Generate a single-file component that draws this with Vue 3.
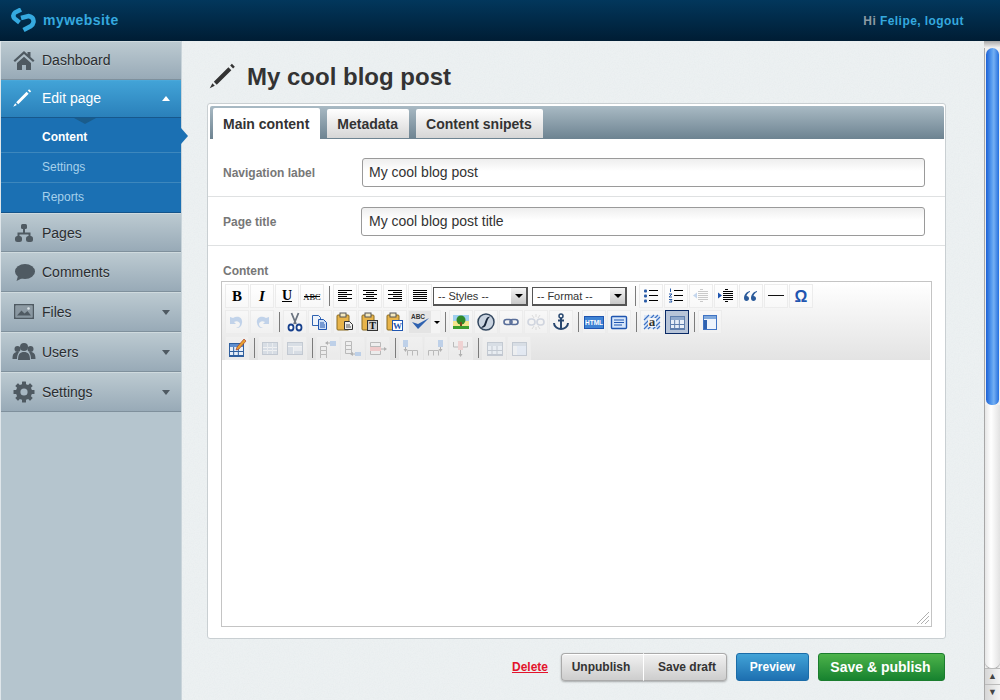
<script setup>
const hlines = (rows, fill = '#000') =>
  rows.map(([x, y, w]) => `<rect x="${x}" y="${y}" width="${w}" height="1" fill="${fill}"/>`).join('')

const clip = '<rect x="2" y="3" width="12" height="15" rx="1" fill="#e8b44a" stroke="#8a6a20" stroke-width="1"/><rect x="5" y="1" width="6" height="4" fill="#f4e9c0" stroke="#555" stroke-width="1"/>'
const tableGrid = (x, y, w, h, stroke = '#7f9cc4', head = '#a9c0e0') =>
  `<rect x="${x}.5" y="${y}.5" width="${w}" height="${h}" fill="#e6eef8" stroke="${stroke}"/><rect x="${x + 1}" y="${y + 1}" width="${w - 1}" height="3" fill="${head}"/>` +
  `<path d="M${x} ${y + 8.5}h${w}M${x} ${y + 12.5}h${w}M${x + w / 3} ${y + 4}v${h - 4}M${x + (2 * w) / 3} ${y + 4}v${h - 4}" stroke="${stroke}" fill="none"/>`
const stackedRows = (x, y, w, h) =>
  `<path d="M${x}.5 ${y}.5h${w}v${h}h-${w}zM${x}.5 ${y + h}.5h${w}v${h}h-${w}zM${x}.5 ${y + 2 * h}.5h${w}v${h}h-${w}z" fill="none" stroke="#888"/>`
const columns = (x, y, w, h) =>
  `<path d="M${x}.5 ${y + h}.5v-${h}h${w}v${h}M${x + w}.5 ${y}.5h${w}v${h}" fill="none" stroke="#888"/>`
const blueBlock = (x, y, w, h) => `<rect x="${x}" y="${y}" width="${w}" height="${h}" fill="#8fb4e4"/>`

const icons = {
  bold: '<text x="10" y="15" text-anchor="middle" font-family="Liberation Serif" font-weight="700" font-size="15" fill="#000">B</text>',
  italic: '<text x="10" y="15" text-anchor="middle" font-family="Liberation Serif" font-weight="700" font-style="italic" font-size="15" fill="#000">I</text>',
  underline: '<text x="10" y="14" text-anchor="middle" font-family="Liberation Serif" font-weight="700" font-size="14" fill="#000">U</text><rect x="5" y="15" width="10" height="1" fill="#000"/>',
  strike: '<text x="10" y="13.5" text-anchor="middle" font-family="Liberation Serif" font-size="8.5" fill="#000">ABC</text><rect x="2" y="10" width="16" height="1" fill="#000"/>',
  alignLeft: hlines([[3, 4, 14], [3, 6, 9], [3, 8, 14], [3, 10, 9], [3, 12, 14], [3, 14, 9]]),
  alignCenter: hlines([[3, 4, 14], [6, 6, 8], [3, 8, 14], [6, 10, 8], [3, 12, 14], [6, 14, 8]]),
  alignRight: hlines([[3, 4, 14], [8, 6, 9], [3, 8, 14], [8, 10, 9], [3, 12, 14], [8, 14, 9]]),
  justify: hlines([[3, 4, 14], [3, 6, 14], [3, 8, 14], [3, 10, 14], [3, 12, 14], [3, 14, 14]]),
  bullets: '<rect x="3" y="3.500" width="3" height="3" rx="1" fill="#2a5ca8"/><rect x="3" y="8.500" width="3" height="3" rx="1" fill="#2a5ca8"/><rect x="3" y="13.500" width="3" height="3" rx="1" fill="#2a5ca8"/>' + hlines([[8, 4, 9], [8, 9, 9], [8, 14, 9]]),
  numbers: '<path d="M4.500 2.500v3.500M3 8h3l-3 3h3M3 13.500h3l-1 1 1 1.500h-3" fill="none" stroke="#2a5ca8"/>' + hlines([[8, 4, 9], [8, 9, 9], [8, 14, 9]]),
  outdent: '<path d="M2 9.500l4-3v6z" fill="#8fb2e0"/>' + hlines([[9, 3, 3], [7, 5, 10], [7, 7, 10], [7, 9, 10], [7, 11, 10], [7, 13, 10], [9, 15, 3]], '#999'),
  indent: '<path d="M6 9.500l-4-3v6z" fill="#1f55b0"/>' + hlines([[9, 3, 3], [7, 5, 10], [7, 7, 10], [7, 9, 10], [7, 11, 10], [7, 13, 10], [9, 15, 3]]),
  quote: '<path d="M9 5C5 6 3 9 3 12c0 2 1 3 2.500 3S8 14 8 12.500 7 10 5.500 10C6 8 7.500 6.500 9 6zM16 5c-4 1-6 4-6 7 0 2 1 3 2.500 3s2.500-1 2.500-2.500-1-2.500-2.500-2.500c.5-2 2-3.500 3.500-4z" fill="#2a5a9a"/>',
  rule: '<rect x="2" y="9" width="16" height="1" fill="#111"/>',
  omega: '<text x="10" y="16" text-anchor="middle" font-family="Liberation Sans" font-weight="700" font-size="16" fill="#1f55b0">Ω</text>',
  undo: '<path d="M6 6C11 3 16 6 15 11s-4 5-6 5c3-1 4-2 4-4s-3-4-6-2l2 2H3V5z" fill="#8fb2e0"/>',
  redo: '<path d="M14 6C9 3 4 6 5 11s4 5 6 5c-3-1-4-2-4-4s3-4 6-2l-2 2h6V5z" fill="#8fb2e0"/>',
  cut: '<path d="M6.500 1l4.500 11M13.500 1L9 12" stroke="#6b7480" stroke-width="1.800" fill="none"/><ellipse cx="6" cy="15.500" rx="2.500" ry="3" fill="#fff" stroke="#17408c" stroke-width="1.800"/><ellipse cx="14" cy="15.500" rx="2.500" ry="3" fill="#fff" stroke="#17408c" stroke-width="1.800"/>',
  copy: '<path d="M2.500 3.500h6l2 2v8h-8z" fill="#eef4fc" stroke="#2f62b0"/><path d="M8.500 7.500h5l3 3v7h-8z" fill="#cfe0f6" stroke="#1f55b0"/><path d="M10 11h4M10 13h5M10 15h5" stroke="#1f55b0"/>',
  paste: clip + '<path d="M9.500 9.500h5l3 3v5h-8z" fill="#eee" stroke="#333"/><path d="M11 13h4M11 15h5" stroke="#555"/>',
  pasteText: clip + '<rect x="7.500" y="8.500" width="10" height="10" fill="#cfcfcf" stroke="#333"/><text x="12.500" y="17" text-anchor="middle" font-family="Liberation Serif" font-weight="700" font-size="10" fill="#111">T</text>',
  pasteWord: clip + '<rect x="7.500" y="8.500" width="10" height="10" fill="#fff" stroke="#1f55b0"/><text x="12.500" y="17" text-anchor="middle" font-family="Liberation Serif" font-weight="700" font-size="9" fill="#1f55b0">W</text>',
  spell: '<text x="8" y="7" text-anchor="middle" font-family="Liberation Sans" font-weight="700" font-size="6.500" fill="#333">ABC</text><path d="M2 10l6 7L19 6 8 12z" fill="#2f62b0"/>',
  image: '<rect x="2" y="3" width="16" height="14" fill="#f4e58c"/><rect x="2" y="3" width="16" height="6" fill="#9fd0f0"/><circle cx="10" cy="8" r="4.500" fill="#2f8a2a"/><rect x="9" y="10" width="2" height="5" fill="#7a4b1e"/><rect x="2" y="14" width="16" height="3" fill="#3c9e2e"/>',
  flash: '<circle cx="10" cy="10" r="8" fill="#c9d3e0" stroke="#33475f" stroke-width="1.500"/><path d="M14.500 4.500c-4 0-4.500 3-5.500 5.500s-1 4-4.500 5.500c5.500 1 5.500-3 6.500-5.500s1-4 3.500-5.500z" fill="#17253a"/>',
  link: '<rect x="3" y="7.500" width="8" height="5" rx="2.500" fill="none" stroke="#5a6f9a" stroke-width="1.600"/><rect x="9" y="7.500" width="8" height="5" rx="2.500" fill="none" stroke="#5a6f9a" stroke-width="1.600"/>',
  unlink: '<g opacity=".45"><rect x="2" y="7" width="7" height="6" rx="3" fill="none" stroke="#5a6f9a" stroke-width="1.600"/><rect x="11" y="7" width="7" height="6" rx="3" fill="none" stroke="#5a6f9a" stroke-width="1.600"/><path d="M6 3l2 3M14 3l-2 3M6 17l2-3M14 17l-2-3M10 2v3M10 15v3" stroke="#888"/></g>',
  anchor: '<circle cx="10" cy="4" r="2" fill="none" stroke="#28476f" stroke-width="1.500"/><path d="M10 6v11M7 8.500h6M3 11c0 4 4 6 7 6s7-2 7-6" fill="none" stroke="#28476f" stroke-width="2"/>',
  html: '<rect x=".5" y="4.500" width="19" height="12" fill="#3f83d4" stroke="#1f55b0"/><text x="10" y="13" text-anchor="middle" font-family="Liberation Sans" font-weight="700" font-size="6.500" fill="#fff">HTML</text>',
  source: '<rect x="2.500" y="4.500" width="15" height="12" rx="1" fill="#d6e6fa" stroke="#1f55b0" stroke-width="1.400"/><path d="M5 8h10M5 10.500h10M5 13h8" stroke="#1f55b0"/>',
  visual: '<rect x="2" y="3" width="16" height="14" fill="#dbe7f8"/><path d="M2 8l5-5M2 13l10-10M2 17L16 3M6 17L18 5M11 17l7-7M15 17l3-3" stroke="#3f73c4" stroke-width="1.200"/><rect x="6" y="6" width="8" height="9" fill="#f4f4f4"/><text x="10" y="14" text-anchor="middle" font-family="Liberation Serif" font-weight="700" font-size="13" fill="#333">a</text>',
  table: tableGrid(3, 4, 14, 13, '#5f7fae', '#8fa8cc'),
  layout: '<rect x="3.500" y="3.500" width="13" height="14" fill="#eef4fc" stroke="#3f73c4"/><rect x="4" y="4" width="12" height="3" fill="#7fa8dc"/><rect x="4" y="8" width="3" height="9" fill="#2f62b0"/>',
  tableEdit: tableGrid(2, 5, 14, 13, '#2f5f9e', '#5f8fcf') + '<path d="M17 1l2 2-7 8-3 1 1-3z" fill="#e8a030" stroke="#a03020" stroke-width=".6"/>',
  rowProps: '<rect x="2.500" y="4.500" width="15" height="12" fill="#c3cfde" stroke="#9aa7b8"/><path d="M3 9.500h14M3 12.500h14" stroke="#f4f6f8"/><path d="M7.500 5v11M12.500 5v11" stroke="#e6ebf1" />',
  cellProps: '<rect x="2.500" y="4.500" width="15" height="12" fill="#c3cfde" stroke="#9aa7b8"/><path d="M3 8.500h14M8.500 9v7" stroke="#f4f6f8"/><rect x="9" y="9" width="8" height="4" fill="#e6ebf1"/>',
  rowBefore: stackedRows(2, 8, 6, 4) + '<path d="M8 5h4" stroke="#777"/><path d="M7 5l3-2v4z" fill="#777"/>' + blueBlock(12, 3, 6, 5),
  rowAfter: stackedRows(2, 3, 6, 4) + '<path d="M8 16h4" stroke="#777"/><path d="M7 16l3-2v4z" fill="#777"/>' + blueBlock(12, 14, 6, 4),
  rowDelete: stackedRows(2, 4, 10, 4) + '<rect x="2" y="9" width="11" height="4" fill="#f0a8a8"/><path d="M13 11h4" stroke="#777"/><path d="M19 11l-3-2v4z" fill="#777"/>',
  colBefore: columns(6, 12, 5, 5) + blueBlock(2, 2, 5, 7) + '<path d="M4.500 9v4" stroke="#777"/><path d="M4.500 14l-2-3h4z" fill="#777"/>',
  colAfter: columns(2, 12, 5, 5) + blueBlock(12, 2, 5, 7) + '<path d="M14.500 9v4" stroke="#777"/><path d="M14.500 14l-2-3h4z" fill="#777"/>',
  colDelete: '<path d="M2.500 4v5h14V4M9.500 9v3" fill="none" stroke="#888"/><rect x="7" y="3" width="5" height="9" fill="#f0b8b8"/><path d="M9.500 12v5" stroke="#777"/><path d="M9.500 19l-2-3h4z" fill="#777"/>',
  split: tableGrid(3, 4, 15, 13, '#9aa7b8', '#c3cfde'),
  merge: '<rect x="3.500" y="4.500" width="14" height="13" fill="#dbe7f8" stroke="#9aa7b8"/><rect x="4" y="5" width="13" height="3" fill="#c3cfde"/><rect x="4" y="8" width="4" height="9" fill="#eef2f6"/>'
}

const btn = (icon, extra = {}) => ({ type: 'btn', icon, ...extra })
const off = (icon) => btn(icon, { dim: true })
const sep = { type: 'sep' }

const rows = [
  [btn('bold'), btn('italic'), btn('underline'), btn('strike'), sep, btn('alignLeft'), btn('alignCenter'), btn('alignRight'), btn('justify'),
    { type: 'select', label: '-- Styles --' }, { type: 'select', label: '-- Format --' }, sep,
    btn('bullets'), btn('numbers'), off('outdent'), btn('indent'), btn('quote'), btn('rule'), btn('omega')],
  [off('undo'), off('redo'), sep, btn('cut'), btn('copy'), btn('paste'), btn('pasteText'), btn('pasteWord'), btn('spell', { split: true }), sep,
    btn('image'), btn('flash'), btn('link'), off('unlink'), btn('anchor'), sep, btn('html'), btn('source'), sep, btn('visual'), btn('table', { active: true }), sep, btn('layout')],
  [btn('tableEdit'), sep, off('rowProps'), off('cellProps'), sep, off('rowBefore'), off('rowAfter'), off('rowDelete'), sep, off('colBefore'), off('colAfter'), off('colDelete'), sep, off('split'), off('merge')]
]

const navIcons = {
  home: '<path d="M12 3L1.500 12.500 3 14l9-8 9 8 1.500-1.500-4-3.600V4h-3v2.200zM5 15v7h5v-5h4v5h5v-7l-7-6.200z"/>',
  pencil: '<path d="M20.500 1.500l2.500 2.500-1.500 1.500-2.500-2.500zM17.500 4.500l2.500 2.500L7.500 19.500 5 17zM3.800 18.300l2 2-4.300 2.200z"/>',
  tree: '<rect x="9" y="3" width="6" height="5" rx="1.500"/><path d="M12 7v5M6.500 16v-3.500h11V16" fill="none" stroke="currentColor" stroke-width="2"/><rect x="3" y="15" width="7" height="6" rx="2.500"/><rect x="14" y="15" width="7" height="6" rx="2.500"/>',
  bubble: '<ellipse cx="13" cy="11.500" rx="10" ry="7.500"/><path d="M6 16l-1.500 5 6-3z"/>',
  picture: '<path fill-rule="evenodd" d="M2 4h20v15H2zM3.500 5.500v12h17v-12z"/><rect x="4" y="6" width="16" height="11" opacity=".35"/><path d="M5 15.500l4.500-5 3 3 3-2.500 3.500 4.500z"/><circle cx="16.500" cy="8.500" r="1.300" fill="#dde4e8"/>',
  users: '<circle cx="12" cy="7" r="4"/><path d="M6 20c0-6 2-8 6-8s6 2 6 8z"/><circle cx="5.500" cy="9" r="3"/><path d="M0.500 19c0-5 1.500-7 5-7 .5 0 1 0 1.500.2C5.500 14 5 16.500 5 19z"/><circle cx="18.500" cy="9" r="3"/><path d="M23.500 19c0-5-1.500-7-5-7-.5 0-1 0-1.500.2 1.500 1.800 2 4.300 2 6.800z"/>',
  gear: '<circle cx="12" cy="12" r="5.800" fill="none" stroke="currentColor" stroke-width="4.600"/><g><rect x="10" y="1.500" width="4" height="21" rx=".5"/><rect x="10" y="1.500" width="4" height="21" rx=".5" transform="rotate(45 12 12)"/><rect x="10" y="1.500" width="4" height="21" rx=".5" transform="rotate(90 12 12)"/><rect x="10" y="1.500" width="4" height="21" rx=".5" transform="rotate(135 12 12)"/></g><circle cx="12" cy="12" r="3.600" fill="#a7b7c2"/>'
}

const navTop = [{ label: 'Dashboard', icon: 'home', cls: 'h39 raised' }]
const navBottom = [
  { label: 'Pages', icon: 'tree', cls: 'h39' },
  { label: 'Comments', icon: 'bubble' },
  { label: 'Files', icon: 'picture', caret: true },
  { label: 'Users', icon: 'users', caret: true },
  { label: 'Settings', icon: 'gear', caret: true }
]
</script>

<template>
  <div class="page">
    <header class="topbar">
      <div class="brand">
        <svg class="logo" viewBox="0 0 26 26" width="26" height="26">
          <path d="M11 1.500L5 4.500Q2 7.500 4.500 10.500L9.500 14.500" fill="none" stroke="#35a9df" stroke-width="4.500"/>
          <path d="M11 10L18.500 8Q24 9 23.500 14 23 16.500 21 18L13.500 22" fill="none" stroke="#35a9df" stroke-width="4.500"/>
        </svg>
        <span class="brand-name">mywebsite</span>
      </div>
      <div class="greeting">Hi <a>Felipe, logout</a></div>
    </header>

    <div class="body">
      <aside class="sidebar">
        <div v-for="item in navTop" :key="item.label" class="nav-item" :class="item.cls">
          <svg class="nav-icon" viewBox="0 0 24 24" v-html="navIcons[item.icon]"></svg>
          <span>{{ item.label }}</span>
        </div>

        <div class="nav-item active raised">
          <svg class="nav-icon" viewBox="0 0 24 24" v-html="navIcons.pencil"></svg>
          <span>Edit page</span>
          <i class="caret up"></i>
        </div>
        <div class="submenu">
          <div class="sub current">Content</div>
          <div class="sub">Settings</div>
          <div class="sub last">Reports</div>
        </div>

        <div v-for="item in navBottom" :key="item.label" class="nav-item" :class="item.cls">
          <svg class="nav-icon" viewBox="0 0 24 24" v-html="navIcons[item.icon]"></svg>
          <span>{{ item.label }}</span>
          <i v-if="item.caret" class="caret"></i>
        </div>
      </aside>

      <main class="main">
        <div class="title-row">
          <svg class="title-icon" viewBox="0 0 24 24" v-html="navIcons.pencil"></svg>
          <h1>My cool blog post</h1>
        </div>

        <section class="card">
          <nav class="tabs">
            <div class="tab selected">Main content</div>
            <div class="tab">Metadata</div>
            <div class="tab">Content snipets</div>
          </nav>

          <div class="field first">
            <label>Navigation label</label>
            <input value="My cool blog post" />
          </div>
          <div class="field second">
            <label>Page title</label>
            <input value="My cool blog post title" />
          </div>

          <div class="content-block">
            <div class="content-label">Content</div>
            <div class="editor">
              <div class="toolbar">
                <div v-for="(row, r) in rows" :key="r" class="tool-row">
                  <template v-for="(tool, t) in row" :key="t">
                    <span v-if="tool.type === 'sep'" class="tool-sep"></span>
                    <div v-else-if="tool.type === 'select'" class="tool-select">
                      <span>{{ tool.label }}</span>
                      <i></i>
                    </div>
                    <div v-else class="tool" :class="{ active: tool.active, split: tool.split }">
                      <svg :class="{ dim: tool.dim }" viewBox="0 0 20 20" width="20" height="20" v-html="icons[tool.icon]"></svg>
                      <b v-if="tool.split"></b>
                    </div>
                  </template>
                </div>
              </div>
              <div class="editor-area">
                <svg class="grip" viewBox="0 0 14 14" width="14" height="14">
                  <path d="M1 13L13 1M5 13l8-8M9 13l4-4" stroke="#b0b0b0" fill="none"/>
                </svg>
              </div>
            </div>
          </div>
        </section>

        <div class="actions">
          <a class="delete">Delete</a>
          <div class="group">
            <button class="unpublish">Unpublish</button>
            <button class="draft">Save draft</button>
          </div>
          <button class="preview">Preview</button>
          <button class="publish">Save &amp; publish</button>
        </div>
      </main>

      <div class="scrollbar">
        <div class="thumb-cap"></div>
        <div class="thumb"></div>
        <div class="track"></div>
        <div class="arrow">▲</div>
        <div class="arrow">▼</div>
      </div>
    </div>
  </div>
</template>

<style>
html, body { margin: 0; height: 100%; overflow: hidden; }
</style>

<style scoped>
.page {
  width: 1000px;
  height: 700px;
  display: flex;
  flex-direction: column;
  font-family: "Liberation Sans", Arial, sans-serif;
  color: #333;
  overflow: hidden;
}

.topbar {
  height: 41px;
  flex: none;
  display: flex;
  align-items: center;
  justify-content: space-between;
  padding: 0 36px 0 10px;
  box-sizing: border-box;
  background: linear-gradient(#02375c, #001d34);
}
.brand { display: flex; align-items: center; }
.logo { margin-right: 7px; }
.brand-name {
  font-size: 14px;
  font-weight: 700;
  color: #35a9df;
  letter-spacing: .45px;
  position: relative;
  top: -1px;
}
.greeting { font-size: 12px; font-weight: 700; color: #8d9aa3; letter-spacing: .43px; }
.greeting a { color: #35a9df; }

.body { flex: 1; display: flex; min-height: 0; }

.sidebar {
  width: 182px;
  flex: none;
  box-sizing: border-box;
  background: #b5c5ce;
  border-left: 1px solid #dfe6ea;
  border-right: 1px solid #c9d4da;
}

.nav-item {
  height: 40px;
  box-sizing: border-box;
  display: flex;
  align-items: center;
  padding: 0 9px 0 11px;
  font-size: 14px;
  color: #2a2d30;
  text-shadow: 0 1px 0 rgba(255, 255, 255, .35);
  background: linear-gradient(#bccad1, #98aab7);
  border-top: 1px solid #cfdade;
  border-bottom: 1px solid #7f909c;
}
.nav-item.h39 { height: 39px; }
.nav-item.raised { padding-bottom: 2px; }
.nav-item.active {
  height: 38px;
  color: #fff;
  text-shadow: none;
  background: linear-gradient(#42a3d7, #2a80ba);
  border-top-color: #4aa8da;
  border-bottom-color: #17588c;
}
.nav-icon {
  width: 24px;
  height: 24px;
  margin-right: 6px;
  fill: #4f5a62;
  color: #4f5a62;
  flex: none;
}
.active .nav-icon { fill: #fff; color: #fff; width: 20px; height: 20px; margin: 0 10px 0 0; }
.caret {
  margin-left: auto;
  margin-right: 2px;
  width: 0;
  height: 0;
  border-left: 4.500px solid transparent;
  border-right: 4.500px solid transparent;
  border-top: 5px solid #4f5a62;
}
.caret.up { border-top: 0; border-bottom: 5px solid #fff; }

.submenu {
  position: relative;
  background: #1b70b3;
  border-bottom: 1px solid #14548a;
  height: 95px;
  box-sizing: border-box;
}
.submenu::before {
  content: "";
  position: absolute;
  left: 73px;
  top: 0;
  border-left: 11px solid transparent;
  border-right: 11px solid transparent;
  border-top: 6px solid #1a5c8c;
}
.sub {
  height: 30px;
  box-sizing: border-box;
  display: flex;
  align-items: center;
  padding: 0 0 1px 41px;
  font-size: 12px;
  color: #a6d0ec;
  border-bottom: 1px solid #3d87bd;
}
.sub.last { border-bottom: 0; height: 30px; padding-bottom: 2px; }
.sub.current { height: 35px; padding: 3px 0 0 41px; color: #fff; font-weight: 700; position: relative; }
.sub.current::after {
  content: "";
  position: absolute;
  right: -7px;
  top: 10px;
  border-top: 8px solid transparent;
  border-bottom: 8px solid transparent;
  border-left: 7px solid #1b70b3;
}

.main {
  flex: 1;
  min-width: 0;
  box-sizing: border-box;
  padding: 0 38px 0 25px;
  background-color: #eef2f3;
  background-image: url("data:image/svg+xml,%3Csvg xmlns='http://www.w3.org/2000/svg' width='200' height='200'%3E%3Cfilter id='n'%3E%3CfeTurbulence type='fractalNoise' baseFrequency='.8' numOctaves='2'/%3E%3CfeColorMatrix values='0 0 0 0 .5 0 0 0 0 .55 0 0 0 0 .58 0 0 0 .12 0'/%3E%3C/filter%3E%3Crect width='200' height='200' filter='url(%23n)'/%3E%3C/svg%3E");
}

.title-row { height: 62px; box-sizing: border-box; padding-top: 8px; display: flex; align-items: center; }
.title-icon { width: 28px; height: 28px; fill: #333; margin: 0 11px 0 1px; flex: none; }
h1 { margin: 0; font-size: 24px; font-weight: 700; color: #333; position: relative; top: 1px; }

.card {
  height: 536px;
  box-sizing: border-box;
  background: #fff;
  border: 1px solid #c9cfd2;
  border-radius: 3px;
}

.tabs {
  height: 33px;
  box-sizing: border-box;
  margin: 2px 1px 0 2px;
  padding: 2px 0 0 3px;
  display: flex;
  gap: 7px;
  background: linear-gradient(#a9bac4, #6d8391);
  border-radius: 2px 2px 0 0;
}
.tab {
  height: 29px;
  box-sizing: border-box;
  padding: 0 11px 0 10px;
  display: flex;
  align-items: center;
  font-size: 14px;
  font-weight: 700;
  color: #333;
  border-radius: 2px 2px 0 0;
  background: linear-gradient(#fff, #d6d6d6);
  margin-top: 1px;
}
.tab.selected { height: 31px; margin-top: 0; background: #fff; }

.field {
  display: flex;
  align-items: center;
  box-sizing: border-box;
  padding: 0 20px 0 15px;
  border-bottom: 1px solid #dfe1e2;
}
.field.first { height: 58px; padding-top: 9px; }
.field.second { height: 49px; }
.field label { width: 139px; flex: none; font-size: 12px; font-weight: 700; color: #777; padding-top: 2px; }
.field.second label { width: 138px; }
.field input {
  flex: 1;
  min-width: 0;
  height: 29px;
  box-sizing: border-box;
  padding: 0 6px;
  border: 1px solid #9a9a9a;
  border-radius: 3px;
  font-family: inherit;
  font-size: 14px;
  color: #333;
  outline: none;
  background: linear-gradient(#eee, #fff 45%);
}
.field.second input { padding-left: 7px; }

.content-block { padding: 18px 13px 0; }
.content-label { font-size: 12px; font-weight: 700; color: #777; height: 17px; padding-left: 2px; }

.editor {
  height: 346px;
  box-sizing: border-box;
  border: 1px solid #c4c4c4;
  display: flex;
  flex-direction: column;
}
.toolbar {
  height: 78px;
  box-sizing: border-box;
  flex: none;
  margin-right: 1px;
  padding: 2px 0 0 3px;
  background: linear-gradient(#fff, #e3e3e3);
}
.tool-row { display: flex; align-items: center; height: 24px; margin-bottom: 2px; }
.tool {
  width: 24px;
  height: 24px;
  box-sizing: border-box;
  margin-right: 1px;
  flex: none;
  display: flex;
  align-items: center;
  justify-content: center;
  border: 1px solid #ececec;
  background: rgba(255, 255, 255, .25);
}
.tool svg { flex: none; }
.tool svg.dim { opacity: .5; }
.tool.active { border-color: #0a2a66; background: #b7c4d8; }
.tool.split {
  width: 33px;
  margin-right: 0;
  justify-content: flex-start;
  padding-left: 1px;
  background: linear-gradient(90deg, #e4e4e4 70%, #f4f4f4 70%);
  border-color: #eee;
}
.tool.split b {
  margin-left: 4px;
  border-left: 3px solid transparent;
  border-right: 3px solid transparent;
  border-top: 3px solid #000;
}
.tool-sep {
  width: 8px;
  height: 20px;
  flex: none;
  background: linear-gradient(#7b7b7b, #7b7b7b) center / 1px 100% no-repeat;
}
.tool-select {
  width: 95px;
  height: 19px;
  margin-right: 4px;
  flex: none;
  box-sizing: border-box;
  display: flex;
  align-items: center;
  justify-content: space-between;
  padding-left: 4px;
  background: #fff;
  border: 1px solid #555;
  border-right-width: 2px;
  border-bottom-width: 2px;
  font-size: 11px;
  color: #333;
}
.tool-select i {
  width: 15px;
  height: 16px;
  flex: none;
  display: flex;
  background: linear-gradient(#f4f4f4, #c9c9c9);
}
.tool-select i::after {
  content: "";
  margin: auto;
  border-left: 4px solid transparent;
  border-right: 4px solid transparent;
  border-top: 4px solid #000;
}
.editor-area { flex: 1; background: #fff; display: flex; align-items: flex-end; justify-content: flex-end; }
.grip { margin: 0 1px 1px 0; }

.actions {
  margin-top: 14px;
  padding-right: 1px;
  display: flex;
  align-items: center;
  justify-content: flex-end;
}
.delete {
  font-size: 12px;
  font-weight: 700;
  color: #e3142c;
  text-decoration: underline;
  margin-right: 13px;
}
.actions button {
  height: 28px;
  box-sizing: border-box;
  border: 1px solid #aaa;
  font-family: inherit;
  font-size: 12px;
  font-weight: 700;
  color: #333;
  padding: 0;
  background: linear-gradient(#f1f1f1, #cdcdcd);
  border-radius: 3px;
}
.group {
  display: flex;
  border-radius: 4px;
  box-shadow: 0 1px 2px rgba(0, 0, 0, .3);
  margin-right: 9px;
}
.group button { width: 83px; box-shadow: inset 0 1px 0 #fff; }
.group .unpublish { border-radius: 4px 0 0 4px; border-right: 1px solid #fff; padding-right: 3px; }
.group .draft { border-left: 0; border-radius: 0 4px 4px 0; padding-left: 4px; }
.actions .preview {
  width: 73px;
  margin-right: 9px;
  color: #fff;
  border-color: #1a6ca8;
  background: linear-gradient(#42a3d7, #1d6fb0);
}
.actions .publish {
  width: 127px;
  padding-right: 2px;
  font-size: 14px;
  color: #fff;
  border-color: #1b7d2e;
  background: linear-gradient(#4db34a, #17822f);
}

.scrollbar {
  width: 16px;
  flex: none;
  display: flex;
  flex-direction: column;
  background: #f0f0f0;
  box-shadow: inset 1px 0 0 #a9a9a9;
}
.thumb-cap { height: 7px; flex: none; background: linear-gradient(#a8a8a8, #f4f4f4); }
.thumb {
  height: 357px;
  flex: none;
  margin: 0 1px 0 2px;
  border-radius: 7px 7px 6px 6px;
  background: linear-gradient(90deg, #1e62d6, #5a9ff0 45%, #73aef2 60%, #2570de);
}
.track {
  flex: 1;
  margin-left: 1px;
  border-radius: 0 0 7px 7px;
  background: linear-gradient(90deg, #e6e6e6, #fff 40%, #e2e2e2);
  box-shadow: 0 1px 1px #999;
}
.arrow {
  height: 15px;
  flex: none;
  text-align: center;
  font-size: 9px;
  line-height: 15px;
  color: #444;
  background: linear-gradient(90deg, #d6d6d6, #f4f4f4);
  border-top: 1px solid #bbb;
  margin-left: 1px;
}
</style>
